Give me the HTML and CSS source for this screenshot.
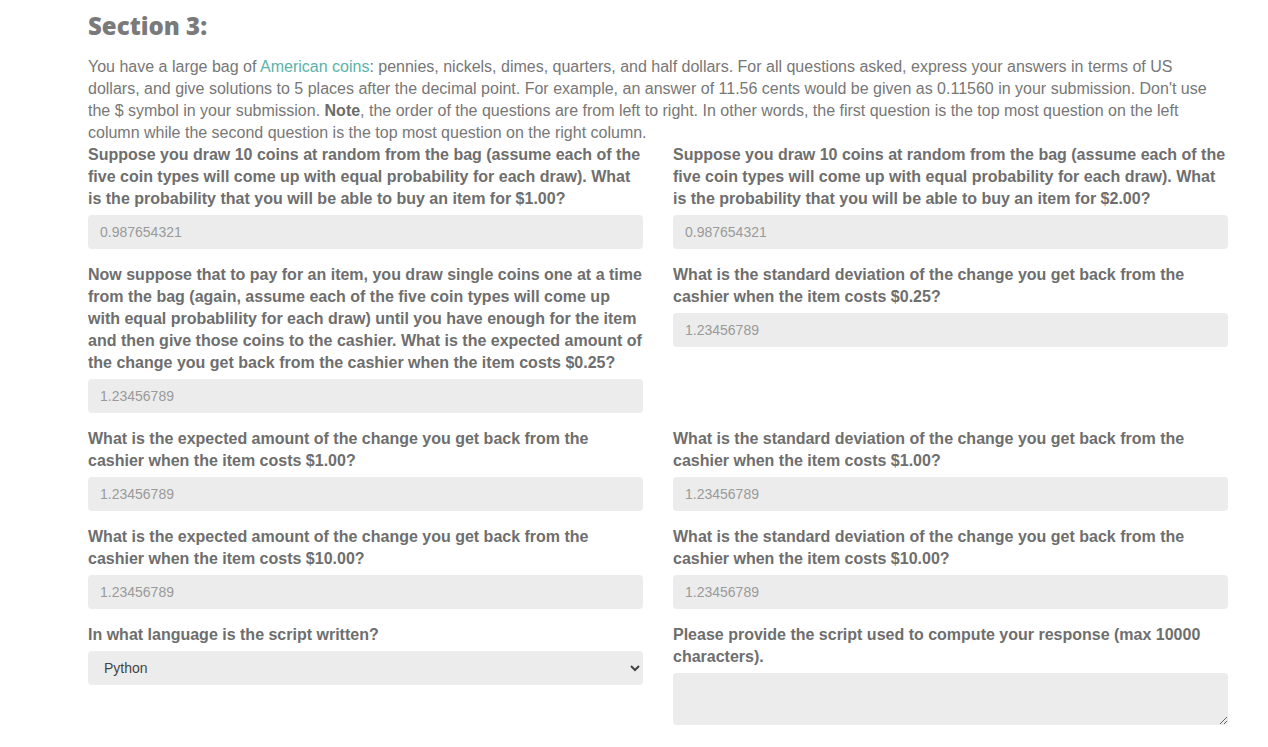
FILE: index.html
```html
<!DOCTYPE html>
<html>
<head>
<meta charset="utf-8">
<link rel="stylesheet" href="styles.css">
</head>
<body>
<div class="page">
  <h2 class="title">Section 3:</h2>
  <p class="intro">You have a large bag of <a href="#" class="link">American coins</a>: pennies, nickels, dimes, quarters, and half dollars. For all questions asked, express your answers in terms of US dollars, and give solutions to 5 places after the decimal point. For example, an answer of 11.56 cents would be given as 0.11560 in your submission. Don't use the $ symbol in your submission. <b>Note</b>, the order of the questions are from left to right. In other words, the first question is the top most question on the left column while the second question is the top most question on the right column.</p>
  <div class="grid">
    <div class="field">
      <label class="label">Suppose you draw 10 coins at random from the bag (assume each of the five coin types will come up with equal probability for each draw). What is the probability that you will be able to buy an item for $1.00?</label>
      <input class="input" type="text" placeholder="0.987654321">
    </div>
    <div class="field">
      <label class="label">Suppose you draw 10 coins at random from the bag (assume each of the five coin types will come up with equal probability for each draw). What is the probability that you will be able to buy an item for $2.00?</label>
      <input class="input" type="text" placeholder="0.987654321">
    </div>
    <div class="field">
      <label class="label">Now suppose that to pay for an item, you draw single coins one at a time from the bag (again, assume each of the five coin types will come up with equal probablility for each draw) until you have enough for the item and then give those coins to the cashier. What is the expected amount of the change you get back from the cashier when the item costs $0.25?</label>
      <input class="input" type="text" placeholder="1.23456789">
    </div>
    <div class="field">
      <label class="label">What is the standard deviation of the change you get back from the cashier when the item costs $0.25?</label>
      <input class="input" type="text" placeholder="1.23456789">
    </div>
    <div class="field">
      <label class="label">What is the expected amount of the change you get back from the cashier when the item costs $1.00?</label>
      <input class="input" type="text" placeholder="1.23456789">
    </div>
    <div class="field">
      <label class="label">What is the standard deviation of the change you get back from the cashier when the item costs $1.00?</label>
      <input class="input" type="text" placeholder="1.23456789">
    </div>
    <div class="field">
      <label class="label">What is the expected amount of the change you get back from the cashier when the item costs $10.00?</label>
      <input class="input" type="text" placeholder="1.23456789">
    </div>
    <div class="field">
      <label class="label">What is the standard deviation of the change you get back from the cashier when the item costs $10.00?</label>
      <input class="input" type="text" placeholder="1.23456789">
    </div>
    <div class="field">
      <label class="label">In what language is the script written?</label>
      <select class="input select">
        <option>Python</option>
        <option>R</option>
        <option>Java</option>
      </select>
    </div>
    <div class="field">
      <label class="label">Please provide the script used to compute your response (max 10000 characters).</label>
      <textarea class="input textarea"></textarea>
    </div>
  </div>
</div>
</body>
</html>
```
FILE: styles.css
```css
html, body {
  margin: 0;
  padding: 0;
  background: #ffffff;
}
.page {
  padding-left: 88px;
  width: 1140px;
  font-family: "Liberation Sans", Arial, sans-serif;
  color: #777777;
}
.title {
  font-family: "Open Sans", sans-serif;
  font-weight: 800;
  font-size: 24px;
  line-height: 30px;
  color: #7a7a7a;
  margin: 11px 0 14px 0;
}
.intro {
  font-size: 16px;
  line-height: 22px;
  margin: 0 0 -1px 0;
  padding-top: 1px;
}
.intro b {
  color: #6b6b6b;
}
.link {
  color: #5cb3a8;
  text-decoration: none;
}
.grid {
  display: grid;
  grid-template-columns: 555px 555px;
  column-gap: 30px;
}
.field {
  display: flex;
  flex-direction: column;
  margin-bottom: 14px;
}
.label {
  font-weight: bold;
  font-size: 16px;
  line-height: 22px;
  color: #6e6e6e;
  padding-top: 1px;
  margin-bottom: 5px;
}
.input {
  box-sizing: border-box;
  height: 34px;
  border: none;
  border-radius: 4px;
  background: #ececec;
  padding: 0 12px;
  font-family: "Liberation Sans", Arial, sans-serif;
  font-size: 14px;
  color: #555555;
  outline: none;
}
.input::placeholder {
  color: #9a9a9a;
}
.select {
  padding: 0 10px 0 12px;
  color: #444444;
}
.textarea {
  height: 52px;
  padding: 6px 12px;
}
```
